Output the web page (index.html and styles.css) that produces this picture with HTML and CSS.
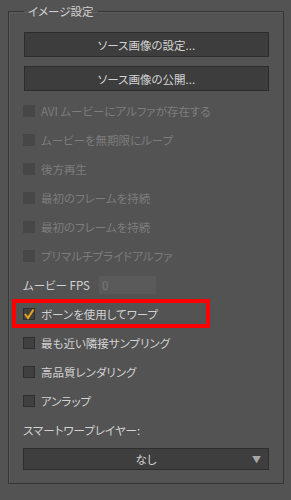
FILE: index.html
```html
<!DOCTYPE html>
<html lang="ja">
<head>
  <meta charset="UTF-8" />
  <meta name="viewport" content="width=device-width, initial-scale=1.0"/>
  <title>イメージ設定</title>
  <link rel="stylesheet" href="styles.css">
</head>
<body>
  <fieldset class="panel">
    <legend>イメージ設定</legend>

    <button class="btn">ソース画像の設定...</button>
    <button class="btn">ソース画像の公開...</button>

    <div class="opt disabled"><span class="box"></span>AVI ムービーにアルファが存在する</div>
    <div class="opt disabled"><span class="box"></span>ムービーを無期限にループ</div>
    <div class="opt disabled"><span class="box"></span>後方再生</div>
    <div class="opt disabled"><span class="box"></span>最初のフレームを持続</div>
    <div class="opt disabled"><span class="box"></span>最初のフレームを持続</div>
    <div class="opt disabled"><span class="box"></span>プリマルチプライドアルファ</div>

    <div class="opt fps">ムービー FPS <span class="field">0</span></div>

    <!-- highlighted option -->
    <div class="opt marked">
      <span class="box checked">
        <svg width="12" height="12" viewBox="0 0 12 12"><polyline points="2,6 5,10 10.5,1.5" fill="none" stroke="#eba51c" stroke-width="2"/></svg>
      </span>ボーンを使用してワープ
    </div>
    <div class="opt"><span class="box"></span>最も近い隣接サンプリング</div>
    <div class="opt"><span class="box"></span>高品質レンダリング</div>
    <div class="opt"><span class="box"></span>アンラップ</div>

    <div class="opt label">スマートワープレイヤー:</div>
    <div class="select">なし<span class="arrow">▼</span></div>
  </fieldset>
</body>
</html>
```

FILE: styles.css
```css
body {
  margin: 0;
  padding: 3px 7px 0 8px;
  background: #535353;
  font-family: "Noto Sans CJK JP", "Noto Sans", sans-serif;
  font-size: 11.5px;
  font-feature-settings: "palt";
  color: #d2d2d2;
  height: 497px;
}
.panel {
  margin: 0;
  padding: 13px 14px 13px 14px;
  border: 1px solid #363636;
  box-shadow: inset 1px 1px 0 #5c5c5c;
  display: flex;
  flex-direction: column;
}
.panel legend {
  padding: 0 4px;
  margin-left: 1px;
  line-height: 16px;
  color: #cfcfcf;
}
.btn {
  margin: 0 0 9px 1px;
  height: 25px;
  background: #3d3d3d;
  border: 1px solid #2c2c2c;
  color: #d4d4d4;
  font: inherit;
  font-feature-settings: "palt";
  padding: 0;
}
.btn + .btn {
  margin-bottom: 5px;
}
.opt {
  height: 29px;
  display: flex;
  align-items: center;
  white-space: nowrap;
}
.opt.disabled {
  color: #7d7d7d;
}
.box {
  width: 12px;
  height: 12px;
  box-sizing: border-box;
  background: #404040;
  border: 1px solid #2e2e2e;
  margin-right: 6px;
  flex-shrink: 0;
  display: flex;
}
.disabled .box {
  background: #474747;
  border-color: #474747;
}
.box svg {
  margin: -1px;
}
.fps .field {
  margin-left: 9px;
  width: 57px;
  height: 18px;
  box-sizing: border-box;
  padding-left: 3px;
  background: #5a5a5a;
  color: #787878;
  line-height: 18px;
}
.marked {
  position: relative;
}
.marked::after {
  content: "";
  position: absolute;
  left: -11px;
  top: 0;
  width: 198px;
  height: 29px;
  box-sizing: border-box;
  border: 4px solid #ff0000;
}
.label {
  height: 29px;
}
.select {
  margin-top: 4px;
  height: 22px;
  box-sizing: border-box;
  background: #3e3e3e;
  border: 1px solid #2e2e2e;
  display: flex;
  align-items: center;
  justify-content: center;
  position: relative;
  color: #d4d4d4;
}
.select .arrow {
  position: absolute;
  right: 7px;
  font-size: 9px;
  color: #a8a8a8;
}
```
